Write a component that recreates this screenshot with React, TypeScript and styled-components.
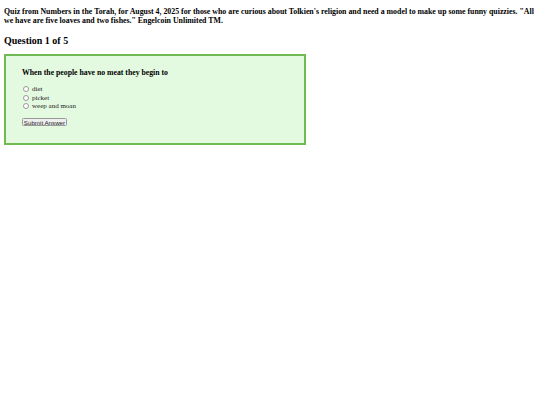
import styled, { createGlobalStyle } from "styled-components";
import * as React from "react";

const GlobalStyle = createGlobalStyle`
  html, body {
    margin: 0;
    padding: 0;
    background: #ffffff;
  }
  body {
    font-family: "Liberation Serif", "Times New Roman", serif;
    color: #000;
  }
`;

const Page = styled.div`
  padding: 7px 3px 0 4px;
`;

const Intro = styled.p`
  margin: 0;
  font-size: 7.85px;
  line-height: 9px;
  font-weight: bold;
`;

const Heading = styled.h2`
  margin: 10px 0 0 0;
  font-size: 10px;
  line-height: 12px;
  font-weight: bold;
`;

const QuizBox = styled.div`
  margin-top: 7px;
  border: 2px solid #6fba52;
  background: #e4fae0;
  padding: 12px 0 0 16px;
  box-sizing: content-box;
  width: 282px;
  height: 75px;
`;

const QuestionText = styled.h3`
  margin: 0;
  font-size: 7.75px;
  line-height: 10px;
  font-weight: bold;
`;

const Options = styled.div`
  margin-top: 7px;
  display: flex;
  flex-direction: column;
`;

const Option = styled.label`
  display: flex;
  align-items: center;
  height: 8.5px;
  font-size: 7px;
  color: #222;
  padding-left: 1px;
`;

const Radio = styled.input`
  appearance: none;
  margin: 0 3px 0 0;
  width: 6px;
  height: 6px;
  border: 0.6px solid #9a9a9a;
  border-radius: 50%;
  background: #fff;
  box-sizing: border-box;
`;

const SubmitButton = styled.button`
  margin-top: 6px;
  width: 45px;
  height: 8.5px;
  padding: 0;
  font-family: "Liberation Sans", Arial, sans-serif;
  font-size: 6.2px;
  line-height: 7px;
  color: #222;
  background: #efefef;
  border: 0.6px solid #9a9a9a;
  border-radius: 1.5px;
`;

const options = ["diet", "picket", "weep and moan"];

export default function App() {
  const [choice, setChoice] = React.useState<string | null>(null);

  return (
    <>
      <GlobalStyle />
      <Page>
        <Intro>
          Quiz from Numbers in the Torah, for August 4, 2025 for those who are curious about
          Tolkien's religion and need a model to make up some funny quizzies. "All we have are
          five loaves and two fishes." Engelcoin Unlimited TM.
        </Intro>
        <Heading>Question 1 of 5</Heading>
        <QuizBox>
          <QuestionText>When the people have no meat they begin to</QuestionText>
          <Options>
            {options.map((o) => (
              <Option key={o}>
                <Radio
                  type="radio"
                  name="answer"
                  checked={choice === o}
                  onChange={() => setChoice(o)}
                />
                {o}
              </Option>
            ))}
          </Options>
          <SubmitButton>Submit Answer</SubmitButton>
        </QuizBox>
      </Page>
    </>
  );
}
